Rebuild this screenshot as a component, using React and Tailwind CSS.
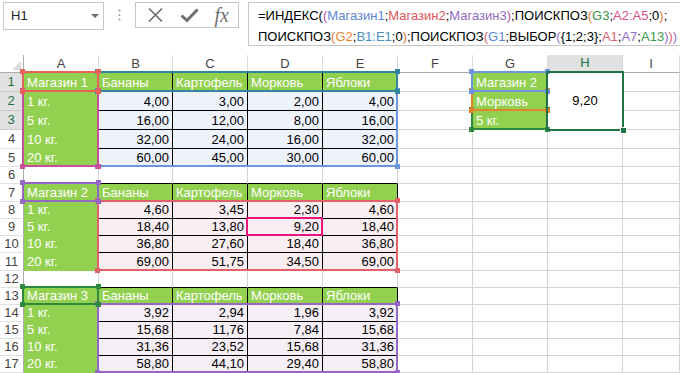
import React from "react";

const fruits = ["Бананы", "Картофель", "Морковь", "Яблоки"];
const weights = ["1 кг.", "5 кг.", "10 кг.", "20 кг."];

const stores = [
  {
    name: "Магазин 1",
    fill: "blue",
    vals: [
      ["4,00", "3,00", "2,00", "4,00"],
      ["16,00", "12,00", "8,00", "16,00"],
      ["32,00", "24,00", "16,00", "32,00"],
      ["60,00", "45,00", "30,00", "60,00"],
    ],
  },
  {
    name: "Магазин 2",
    fill: "pink",
    vals: [
      ["4,60", "3,45", "2,30", "4,60"],
      ["18,40", "13,80", "9,20", "18,40"],
      ["36,80", "27,60", "18,40", "36,80"],
      ["69,00", "51,75", "34,50", "69,00"],
    ],
  },
  {
    name: "Магазин 3",
    fill: "lilac",
    vals: [
      ["3,92", "2,94", "1,96", "3,92"],
      ["15,68", "11,76", "7,84", "15,68"],
      ["31,36", "23,52", "15,68", "31,36"],
      ["58,80", "44,10", "29,40", "58,80"],
    ],
  },
];

const kinds = {
  plain: "bg-white border-[#d4d4d4]",
  green: "bg-[#92d050] border-[#92d050] text-white",
  head: "bg-[#92d050] border-black text-white",
  blue: "bg-[#eef2fb] border-black text-black justify-end",
  pink: "bg-[#f8eef2] border-black text-black justify-end",
  lilac: "bg-[#f6eef5] border-black text-black justify-end",
  above: "bg-white border-r-[#d4d4d4] border-b-black",
  merged: "row-span-3 bg-white border-[#d4d4d4] text-black justify-center !items-center",
};

// formula text, coloured the way Excel colours range references
const line1 = [
  ["=ИНДЕКС(", "text-black"],
  ["(", "text-[#c055a8]"],
  ["Магазин1", "text-[#5b85d6]"],
  [";", "text-black"],
  ["Магазин2", "text-[#e0555a]"],
  [";", "text-black"],
  ["Магазин3", "text-[#8e6cc0]"],
  [")", "text-[#c055a8]"],
  [";ПОИСКПОЗ", "text-black"],
  ["(", "text-[#e07b39]"],
  ["G3", "text-[#3a9a4a]"],
  [";", "text-black"],
  ["A2:A5", "text-[#d4508c]"],
  [";0", "text-black"],
  [")", "text-[#e07b39]"],
  [";", "text-black"],
];
const line2 = [
  ["ПОИСКПОЗ", "text-black"],
  ["(", "text-[#e07b39]"],
  ["G2", "text-[#e8872f]"],
  [";", "text-black"],
  ["B1:E1", "text-[#4a8fbf]"],
  [";0", "text-black"],
  [")", "text-[#e07b39]"],
  [";ПОИСКПОЗ", "text-black"],
  ["(", "text-[#e0606a]"],
  ["G1", "text-[#5b85d6]"],
  [";ВЫБОР", "text-black"],
  ["(", "text-[#9a6cc8]"],
  ["{1;2;3}", "text-black"],
  [";", "text-black"],
  ["A1", "text-[#e0607a]"],
  [";", "text-black"],
  ["A7", "text-[#9070c8]"],
  [";", "text-black"],
  ["A13", "text-[#3a9a4a]"],
  [")", "text-[#9a6cc8]"],
  [")", "text-[#e0606a]"],
  [")", "text-[#9a6cc8]"],
];

const ranges = [
  { area: "col-start-3 col-span-4 row-start-3 row-span-4", line: "border-[#6d95dc]", dot: "bg-[#6d95dc]" },
  { area: "col-start-3 col-span-4 row-start-9 row-span-4", line: "border-[#e2606a]", dot: "bg-[#e2606a]" },
  { area: "col-start-3 col-span-4 row-start-15 row-span-4", line: "border-[#9467c6]", dot: "bg-[#9467c6]" },
  { area: "col-start-2 row-start-3 row-span-4", line: "border-[#c8509a]", dot: "bg-[#c8509a]" },
  { area: "col-start-3 col-span-4 row-start-2", line: "border-[#31859c]", dot: "bg-[#31859c]" },
  { area: "col-start-2 row-start-2", line: "border-[#e8605a]", dot: "bg-[#e8605a]" },
  { area: "col-start-2 row-start-8", line: "border-[#9467c6]", dot: "bg-[#9467c6]" },
  { area: "col-start-2 row-start-14", line: "border-[#2e8b3e]", dot: "bg-[#2e8b3e]" },
  { area: "col-start-8 row-start-4", line: "border-[#2e8b3e]", dot: "bg-[#2e8b3e]" },
  { area: "col-start-8 row-start-3", line: "border-[#e5822d]", dot: "bg-[#e5822d]" },
  { area: "col-start-8 row-start-2", line: "border-[#6d95dc]", dot: "bg-[#6d95dc]" },
];

function buildRows() {
  const rows = [];
  for (let r = 1; r <= 17; r++) {
    const block = Math.floor((r - 1) / 6);
    const off = (r - 1) % 6;
    const cells = [];
    // A
    if (off === 0) cells.push({ t: stores[block].name, k: "green" });
    else if (off <= 4) cells.push({ t: weights[off - 1], k: "green" });
    else cells.push({ k: "plain" });
    // B..E
    for (let c = 0; c < 4; c++) {
      if (off === 0) cells.push({ t: fruits[c], k: "head" });
      else if (off <= 4) cells.push({ t: stores[block].vals[off - 1][c], k: stores[block].fill });
      else cells.push({ k: "above" });
    }
    // F
    cells.push({ k: "plain" });
    // G, H
    if (r === 1) {
      cells.push({ t: "Магазин 2", k: "green" });
      cells.push({ t: "9,20", k: "merged" });
    } else if (r === 2) {
      cells.push({ t: "Морковь", k: "green" });
    } else if (r === 3) {
      cells.push({ t: "5 кг.", k: "green" });
    } else {
      cells.push({ k: "plain" });
      cells.push({ k: "plain" });
    }
    // I
    cells.push({ k: "plain" });
    rows.push({ r, cells });
  }
  return rows;
}

const GRID =
  "grid grid-cols-[24px_75px_74px_75px_75px_75px_75px_75px_75px_57px] grid-rows-[18px_19px_19px_19px_19px_18px_17px_18px_17px_17px_17px_18px_17px_17px_17px_17px_17px_17px]";

function Range({ area, line, dot }) {
  return (
    <div className={`relative ${area}`}>
      <div className={`absolute left-[-2px] top-[-2px] right-0 bottom-0 border-2 ${line}`} />
      <span className={`absolute left-[-4px] top-[-4px] h-[5px] w-[5px] ${dot}`} />
      <span className={`absolute right-[-2px] top-[-4px] h-[5px] w-[5px] ${dot}`} />
      <span className={`absolute left-[-4px] bottom-[-2px] h-[5px] w-[5px] ${dot}`} />
      <span className={`absolute right-[-2px] bottom-[-2px] h-[5px] w-[5px] ${dot}`} />
    </div>
  );
}

function FormulaBar() {
  return (
    <div className="flex h-[55px] items-start bg-white pt-[2px]">
      {/* Name box */}
      <div className="ml-[3px] flex h-[28px] w-[101px] items-center justify-between border border-[#c6c6c6] pl-[7px] pr-[4px] text-[13px] text-[#222]">
        <span>H1</span>
        <span className="h-0 w-0 border-x-[4px] border-t-[4px] border-x-transparent border-t-[#6d6d6d]" />
      </div>
      <div className="flex h-[26px] w-[31px] items-center justify-center">
        <svg width="3" height="12" viewBox="0 0 3 12">
          <circle cx="1.5" cy="1.5" r="1" fill="#9a9a9a" />
          <circle cx="1.5" cy="6" r="1" fill="#9a9a9a" />
          <circle cx="1.5" cy="10.5" r="1" fill="#9a9a9a" />
        </svg>
      </div>
      {/* cancel / enter / fx */}
      <div className="flex h-[26px] w-[104px] items-center justify-between border border-[#c6c6c6] pl-[11px] pr-[9px]">
        <svg width="17" height="16" viewBox="0 0 17 16">
          <path d="M2 1.5 L15 14.5 M15 1.5 L2 14.5" stroke="#6f6f6f" strokeWidth="1.7" fill="none" />
        </svg>
        <svg width="19" height="15" viewBox="0 0 19 15">
          <path d="M1.5 7.5 L7 12.5 L17.5 1.5" stroke="#6f6f6f" strokeWidth="3" fill="none" />
        </svg>
        <span className="font-['Liberation_Serif',serif] text-[20px] italic leading-none text-[#6f6f6f]">fx</span>
      </div>
      {/* formula box */}
      <div className="ml-[9px] h-[44px] flex-1 border border-r-0 border-[#c6c6c6] pl-[9px] pt-[2px] text-[13px] leading-[21px] whitespace-nowrap">
        <div>
          {line1.map(([t, c], i) => (
            <span key={i} className={c}>{t}</span>
          ))}
        </div>
        <div>
          {line2.map(([t, c], i) => (
            <span key={i} className={c}>{t}</span>
          ))}
        </div>
      </div>
    </div>
  );
}

function Sheet() {
  const cols = ["A", "B", "C", "D", "E", "F", "G", "H", "I"];
  const rows = buildRows();
  return (
    <div className="relative">
      <div className={GRID}>
        {/* corner */}
        <div className="flex items-end justify-end border-r border-b border-[#ababab] bg-white pb-[2px] pr-[2px]">
          <svg width="9" height="9" viewBox="0 0 9 9">
            <polygon points="9,0 9,9 0,9" fill="#dadada" />
          </svg>
        </div>
        {cols.map((c) =>
          c === "H" ? (
            <div key={c} className="flex items-center justify-center border-r border-b-2 border-r-[#d4d4d4] border-b-[#217346] bg-[#e1e1e1] text-[13px] text-[#217346]">
              {c}
            </div>
          ) : (
            <div key={c} className="flex items-center justify-center border-r border-b border-r-[#dcdcdc] border-b-[#ababab] bg-white text-[13px] text-[#444]">
              {c}
            </div>
          )
        )}
        {rows.map(({ r, cells }) => (
          <React.Fragment key={r}>
            {r <= 3 ? (
              <div className="flex items-center justify-center border-r-2 border-b border-r-[#217346] border-b-[#c8c8c8] bg-[#e1e1e1] text-[13px] text-[#217346]">
                {r}
              </div>
            ) : (
              <div className="flex items-center justify-center border-r border-b border-r-[#ababab] border-b-[#e1e1e1] bg-white text-[13px] text-[#444]">
                {r}
              </div>
            )}
            {cells.map((cell, i) => (
              <div
                key={i}
                className={`flex items-end overflow-hidden border-r border-b px-[3px] pb-[2px] text-[13px] leading-none whitespace-nowrap ${kinds[cell.k]}`}
              >
                {cell.t}
              </div>
            ))}
          </React.Fragment>
        ))}
      </div>

      {/* range highlights, drawn over the cells */}
      <div className={`pointer-events-none absolute inset-0 ${GRID}`}>
        {ranges.map((rg, i) => (
          <Range key={i} {...rg} />
        ))}
        <div className="relative col-start-5 row-start-10">
          <div className="absolute left-[-2px] top-[-2px] right-0 bottom-0 border-2 border-[#e8157d]" />
        </div>
        <div className="relative col-start-9 row-start-2 row-span-3">
          <div className="absolute left-[-2px] top-[-2px] right-[-1px] bottom-[-1px] border-2 border-[#217346]" />
          <span className="absolute right-[-4px] bottom-[-4px] h-[7px] w-[7px] border border-white bg-[#217346]" />
        </div>
      </div>
    </div>
  );
}

export default function App() {
  return (
    <div className="h-[373px] w-[680px] overflow-hidden bg-white font-['Liberation_Sans',Arial,sans-serif]">
      <FormulaBar />
      <Sheet />
    </div>
  );
}
